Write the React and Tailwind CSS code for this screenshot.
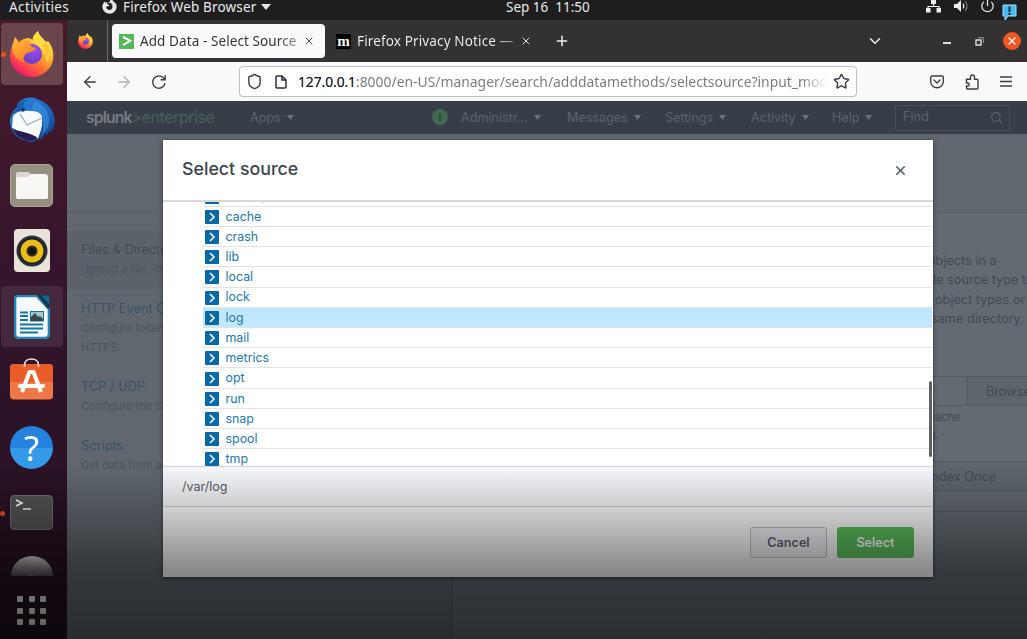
import React from "react";
import { Power, Star, Menu, Search, X, Plus, ChevronDown, ArrowLeft, ArrowRight, Shield } from "lucide-react";
import { FaFirefoxBrowser } from "react-icons/fa";

const ROWS = ["backups", "cache", "crash", "lib", "local", "lock", "log", "mail", "metrics", "opt", "run", "snap", "spool", "tmp"];

function Firefox({ className, id }) {
  return (
    <svg viewBox="0 0 44 46" className={className}>
      <defs>
        <linearGradient id={id + "a"} x1="0.85" y1="0.1" x2="0.25" y2="0.95">
          <stop offset="0" stopColor="#fff44f" />
          <stop offset="0.35" stopColor="#ffb52e" />
          <stop offset="0.65" stopColor="#ff6a36" />
          <stop offset="1" stopColor="#f5156c" />
        </linearGradient>
        <radialGradient id={id + "b"} cx="0.6" cy="0.3" r="0.8">
          <stop offset="0" stopColor="#a04fe8" />
          <stop offset="1" stopColor="#5b3bc4" />
        </radialGradient>
        <linearGradient id={id + "c"} x1="0" y1="0" x2="0.6" y2="1">
          <stop offset="0" stopColor="#ffc03a" />
          <stop offset="1" stopColor="#ff7a24" />
        </linearGradient>
      </defs>
      <path d="M28 0c1 5 5 7 8 11l2-1c5 6 6 13 5 19-2 10-11 17-21 17C10 46 1 37 0 26 0 20 2 14 5 11l0-5 4 5c3-3 7-4 10-4l4 2c1-4 2-7 5-9z" fill={"url(#" + id + "a)"} />
      <path d="M28 0c1 5 5 7 8 12 5 7 4 15 1 20 0-8-5-14-10-17-4-3-5-6-4-9 1-2 3-4 5-6z" fill="#ffdc3c" />
      <circle cx="22" cy="23" r="10" fill={"url(#" + id + "b)"} />
      <path d="M2 15l3-9 4 6c3-2 7-3 11-2-1 2 0 4 2 6l4 1c-1 3-5 4-9 5-4 3-4 6-3 9-7-1-12-7-12-16z" fill={"url(#" + id + "c)"} />
      <path d="M32 14c4 5 5 11 2 16 6-5 6-13 3-18z" fill="#ffc53a" />
    </svg>
  );
}

function Thunderbird() {
  return (
    <svg viewBox="0 0 46 46" className="h-[46px] w-[46px]">
      <defs>
        <linearGradient id="tb" x1="0" y1="0" x2="1" y2="1">
          <stop offset="0" stopColor="#2c8be0" />
          <stop offset="0.55" stopColor="#1f66bd" />
          <stop offset="1" stopColor="#14357f" />
        </linearGradient>
      </defs>
      <path d="M13 3c4-3 11-3 15-1 10 3 17 11 18 21 0 5-2 10-5 14l1-5-5 7 0-4-5 8-1-3c-4 5-10 6-13 4C8 42 0 34 1 22c1-5 3-9 7-12 0-3 2-6 5-7z" fill="url(#tb)" />
      <path d="M26 4c7 3 13 9 14 17 1 7-2 12-7 17 2-6 2-14-1-19-2-5-7-6-10-7z" fill="#3c9bea" opacity=".55" />
      <path d="M4 19c3-5 11-6 18-5 6 0 10 2 11 6l0 8c-1 6-3 10-4 14C18 41 7 36 3 31z" fill="#f8fafc" />
      <path d="M11 17l7 11 15-7" fill="none" stroke="#9cabb9" strokeWidth="1.2" />
      <path d="M3 31c6 4 18 4 26 10-5 4-12 3-17 0-4-2-7-6-9-10z" fill="#251d51" />
      <path d="M2 22c2-7 7-9 15-9-5-4-2-9 2-10-7-1-10 3-11 8-4 3-6 7-6 11z" fill="#1a5cae" />
      <circle cx="14" cy="13" r="1.8" fill="#14325f" />
    </svg>
  );
}

function Files() {
  return (
    <div className="flex h-[43px] w-[43px] items-center justify-center rounded-[5px] border border-[#aaa495] bg-[#969080]">
      <svg viewBox="0 0 32 28" className="h-[28px] w-[32px]">
        <path d="M0 2a2 2 0 012-2h11l3 4h16v22H2a2 2 0 01-2-2z" fill="#dcd7ce" />
        <path d="M0 7a2 2 0 012-2h10l3-3h14a3 3 0 013 3v20a2 2 0 01-2 2H2a2 2 0 01-2-2z" fill="#f8f6f4" />
      </svg>
    </div>
  );
}

function Speaker() {
  return (
    <svg viewBox="0 0 36 43" className="h-[43px] w-[36px]">
      <rect width="36" height="43" rx="4" fill="#e9e3da" />
      <circle cx="18" cy="22" r="15.5" fill="#29313b" />
      <circle cx="18" cy="22" r="13" fill="#15191f" />
      <circle cx="18" cy="22" r="11.5" fill="#eabd18" />
      <circle cx="18" cy="22" r="5.5" fill="#2b2924" />
      <circle cx="18" cy="22" r="3.3" fill="#111" />
    </svg>
  );
}

function Writer() {
  return (
    <svg viewBox="0 0 36 44" className="h-[44px] w-[36px]">
      <path d="M4 1h19l12 13v25a4 4 0 01-4 4H5a4 4 0 01-4-4V4a3 3 0 013-3z" fill="#f6fafc" stroke="#2487b7" strokeWidth="2.6" />
      <path d="M27 .5h8v9z" fill="#0c6b9c" />
      <path d="M23 0h4l8 9v6z" fill="#15364f" />
      <path d="M6 17.500h8M6 21h8M6 25h8M6 29.500h23M6 33.500h23M6 37.500h18" stroke="#1775a4" strokeWidth="1.8" />
      <rect x="16.500" y="16.500" width="13" height="9.500" fill="#9ac7df" stroke="#1775a4" />
      <path d="M17 26v-4l4-4 3 4 2-1 3 3v2z" fill="#3b4742" />
      <circle cx="27" cy="19" r="1.3" fill="#f0c43a" />
    </svg>
  );
}

function Software() {
  return (
    <svg viewBox="0 0 43 42" className="h-[42px] w-[43px]">
      <rect y="6" width="43" height="35.500" rx="4" fill="#f07746" />
      <path d="M4 6h35a4 4 0 014 4v14H0V10a4 4 0 014-4z" fill="#ea5c28" />
      <path d="M14.500 9V7c0-8 14-8 14 0v2" fill="none" stroke="#f5e8da" strokeWidth="1.6" />
      <path d="M12 34l7.500-20h4L31 34" fill="none" stroke="#fff" strokeWidth="4" strokeLinejoin="round" />
      <path d="M10 28h23" fill="none" stroke="#fff" strokeWidth="4" strokeLinecap="round" />
    </svg>
  );
}

function Disc() {
  return (
    <svg viewBox="0 0 42 20" className="h-[20px] w-[42px]">
      <defs>
        <linearGradient id="disc" x1="0" y1="0" x2="0" y2="1">
          <stop offset="0" stopColor="#d2cdd2" />
          <stop offset="1" stopColor="#4d444e" />
        </linearGradient>
      </defs>
      <path d="M0 20a21 20 0 0142 0z" fill="url(#disc)" />
      <path d="M21 20L7 7M21 20L12 3" stroke="#85808a" strokeWidth=".5" />
      <circle cx="21" cy="20" r="5" fill="none" stroke="#5b525c" />
    </svg>
  );
}

function Dock() {
  return (
    <aside className="flex h-[619px] w-[67px] shrink-0 flex-col items-center bg-linear-to-b from-[#47192a] via-[#33152c] via-45% to-[#230f20] pr-[4px]">
      <div className="relative mt-[3px] flex h-[62px] w-[62px] items-center justify-center rounded-[4px] bg-[#6b454e]">
        <i className="absolute left-0 top-[29px] h-[5px] w-[5px] rounded-full bg-[#e95420]" />
        <Firefox id="dockfx" className="h-[46px] w-[44px]" />
      </div>
      <div className="mt-[12px]"><Thunderbird /></div>
      <div className="mt-[21px]"><Files /></div>
      <div className="mt-[22px]"><Speaker /></div>
      <div className="mt-[14px] flex h-[61px] w-[62px] items-center justify-center rounded-[4px] bg-[#43283e]"><Writer /></div>
      <div className="mt-[11px]"><Software /></div>
      <div className="mt-[26px] flex h-[43px] w-[43px] items-center justify-center rounded-full bg-linear-to-b from-[#2582dd] from-50% to-[#3399e8] to-50% font-['Noto_Sans',sans-serif] text-[34px] leading-none text-white">?</div>
      <div className="relative mt-[26px] h-[35px] w-[43px] rounded-[4px] border border-[#707070] bg-[#535353]">
        <i className="absolute -left-[11px] top-[15px] h-[5px] w-[5px] rounded-full bg-[#e95420]" />
        <svg viewBox="0 0 43 35" className="h-[35px] w-[43px]"><path d="M5 4l6 3-6 3M12 13h8" fill="none" stroke="#fff" strokeWidth="1.6" /></svg>
      </div>
      <div className="mt-[26px]"><Disc /></div>
      <div className="mt-[20px] grid grid-cols-3 gap-[5.500px]">
        {[0, 1, 2, 3, 4, 5, 6, 7, 8].map((i) => <i key={i} className="h-[6px] w-[6px] rounded-[1px] bg-[#e0dce0]" />)}
      </div>
    </aside>
  );
}

function TopBar() {
  return (
    <header className="flex h-[20px] items-start bg-[#1e1e1e] font-['Noto_Sans',sans-serif] text-[13.500px] leading-[14px] text-[#e8e8e8]">
      <span className="w-[94px] pl-[9px] tracking-[0.4px]">Activities</span>
      <span className="flex w-[412px] items-start">
        <FaFirefoxBrowser className="-mt-px ml-[8px] h-[15px] w-[15px]" />
        <span className="ml-[6px] whitespace-nowrap tracking-[0.15px]">Firefox Web Browser</span>
        <svg viewBox="0 0 10 6" className="ml-[5px] mt-[4px] h-[6px] w-[10px]"><path d="M0 0h10L5 6z" fill="#e8e8e8" /></svg>
      </span>
      <span className="whitespace-pre">Sep 16  11:50</span>
      <span className="ml-auto flex items-start pr-[10px]">
        <svg viewBox="0 0 15 13" className="h-[13px] w-[15px]"><path d="M5 0h5v4H5zM0 8h4.500v4.500H0zM10.500 8H15v4.500h-4.500z" fill="#eee" /><path d="M7.500 4v3M2 9V6.500h11V9" fill="none" stroke="#eee" strokeWidth="1.2" /></svg>
        <svg viewBox="0 0 14 12" className="ml-[13px] h-[12px] w-[14px]"><path d="M0 4h3l4-4v12L3 8H0z" fill="#eee" /><path d="M9 3.500c1 1.500 1 3.500 0 5" fill="none" stroke="#eee" strokeWidth="1.2" /><path d="M11 1c2.500 3 2.500 7 0 10" fill="none" stroke="#888" strokeWidth="1.1" /></svg>
        <Power className="-mt-[2px] ml-[12px] h-[15px] w-[15px]" strokeWidth={2} />
        <svg viewBox="0 0 15 16" className="ml-[7px] mt-[4px] h-[16px] w-[15px]"><path d="M1 1h13v11H6l-3 4v-4H1z" fill="#48b9ef" stroke="#9ce2ff" /><path d="M7.500 2.500V8M7.500 9v2" stroke="#0d2633" strokeWidth="2" /></svg>
      </span>
    </header>
  );
}

function TabBar() {
  return (
    <div className="flex h-[42px] items-center bg-[#333132] font-['Noto_Sans',sans-serif] text-[13.500px]">
      <div className="flex h-full w-[41px] items-center border-r border-[#6b696a] pl-[11px]"><Firefox id="tabfx" className="h-[16px] w-[15px]" /></div>
      <div className="ml-[4px] flex h-[34px] w-[213px] items-center rounded-[4px] bg-[#fafafc] pl-[7px]">
        <span className="flex h-[15px] w-[15px] shrink-0 items-center justify-center bg-[#53b855]">
          <svg viewBox="0 0 10 10" className="h-[10px] w-[10px]"><path d="M1 1l7.500 3.800L1 9" fill="none" stroke="#fff" strokeWidth="2" /></svg>
        </span>
        <span className="ml-[6px] w-[161px] overflow-hidden whitespace-nowrap bg-linear-to-r from-[#303036] from-85% to-[#aaa] bg-clip-text tracking-[0.09px] text-transparent">Add Data - Select Source</span>
        <X className="ml-[2px] h-[12px] w-[12px] text-[#4a4a50]" strokeWidth={2} />
      </div>
      <div className="ml-[11px] flex items-center">
        <span className="flex h-[15px] w-[15px] items-center justify-center bg-black font-['Liberation_Serif',serif] text-[15px] font-bold leading-none text-white">m</span>
        <span className="ml-[6px] w-[157px] overflow-hidden whitespace-nowrap bg-linear-to-r from-[#f2f2f2] from-88% to-[#777] bg-clip-text tracking-[0.14px] text-transparent">Firefox Privacy Notice —</span>
        <X className="ml-[6px] h-[12px] w-[12px] text-[#e0e0e0]" strokeWidth={2} />
      </div>
      <Plus className="ml-[22px] h-[16px] w-[16px] text-[#eee]" strokeWidth={2.2} />
      <div className="ml-auto flex items-center pr-[6px]">
        <ChevronDown className="h-[18px] w-[18px] text-[#eee]" strokeWidth={2} />
        <i className="ml-[59px] mt-[4px] h-[1.500px] w-[8px] bg-[#ddd]" />
        <svg viewBox="0 0 9 9" className="ml-[24px] h-[9px] w-[9px]"><path d="M1 3h5v5H1z" fill="none" stroke="#ddd" strokeWidth="1.4" /><path d="M3 .7h5.300V6" fill="none" stroke="#999" /></svg>
        <span className="ml-[19px] flex h-[18px] w-[18px] items-center justify-center rounded-full bg-[#ee5622]"><X className="h-[12px] w-[12px] text-white" strokeWidth={2.400} /></span>
      </div>
    </div>
  );
}

function Toolbar() {
  return (
    <div className="flex h-[39px] items-center bg-[#f9f9fb] text-[#3e3e46]">
      <ArrowLeft className="ml-[14px] h-[18px] w-[18px]" strokeWidth={1.800} />
      <ArrowRight className="ml-[16px] h-[18px] w-[18px] text-[#b4b4b8]" strokeWidth={1.800} />
      <svg viewBox="0 0 16 16" className="ml-[18px] h-[16px] w-[16px]"><path d="M14 9A6.200 6.200 0 1112.300 3.800L14 5.500M14.200 1v4.800H9.500" fill="none" stroke="#3e3e46" strokeWidth="1.4" /></svg>
      <div className="ml-[72px] flex h-[31px] w-[618px] items-center rounded-[4px] border border-[#bcbcc2] bg-white">
        <Shield className="ml-[6px] h-[17px] w-[17px]" strokeWidth={2} />
        <svg viewBox="0 0 12 14" className="ml-[12px] h-[14px] w-[12px]"><path d="M1 2a1 1 0 011-1h5l4 4v7a1 1 0 01-1 1H2a1 1 0 01-1-1zM7 1v4h4" fill="none" stroke="#2e2e34" strokeWidth="1.5" /></svg>
        <span className="ml-[11px] mt-px w-[529px] overflow-hidden whitespace-nowrap bg-linear-to-r from-[#77777c] from-95% to-[#fff] bg-clip-text font-['Noto_Sans',sans-serif] text-[13.900px] text-transparent"><span className="tracking-[-0.1px] text-[#1d1d22]">127.0.0.1</span>:8000/en-US/manager/search/adddatamethods/selectsource?input_mode=1</span>
        <Star className="ml-[6px] h-[17px] w-[17px] shrink-0" strokeWidth={2} />
      </div>
      <svg viewBox="0 0 14 14" className="ml-[73px] h-[14px] w-[14px]"><path d="M2 1h10a1.300 1.300 0 011.300 1.300V6.500a6.300 6.300 0 01-12.600 0V2.300A1.300 1.300 0 012 1zM4 5l3 3 3-3" fill="none" stroke="#3e3e46" strokeWidth="1.4" strokeLinecap="round" /></svg>
      <svg viewBox="0 0 14 16" className="ml-[21px] h-[16px] w-[14px]"><path d="M1.500 9V5.200h4V3a2 2 0 014 0v2.200H12a1 1 0 011 1V14a1 1 0 01-1 1H2.500a1 1 0 01-1-1v-2h1.200a1.500 1.500 0 000-3z" fill="none" stroke="#3e3e46" strokeWidth="1.4" /></svg>
      <svg viewBox="0 0 12 11" className="ml-[21px] h-[11px] w-[12px]"><path d="M0 1h12M0 5.500h12M0 10h12" stroke="#3e3e46" strokeWidth="1.3" /></svg>
    </div>
  );
}

function Caret() {
  return <svg viewBox="0 0 7 5" className="ml-[6px] h-[5px] w-[7px]"><path d="M0 0h7L3.500 5z" fill="#667078" /></svg>;
}

function NavItem({ label, className }) {
  return <span className={"flex shrink-0 items-center whitespace-nowrap " + className}>{label}<Caret /></span>;
}

function SplunkNav() {
  return (
    <nav className="flex h-[33px] items-center bg-[#373e48] pt-px text-[12.600px] text-[#5b636c]">
      <span className="ml-[19px] w-[164px] whitespace-nowrap text-[15.800px] tracking-[-0.35px]"><b className="font-semibold tracking-[-0.9px] text-[#747a81]">splunk</b><span className="text-[#476153]">&gt;enterprise</span></span>
      <NavItem label="Apps" className="w-[182px]" />
      <span className="mb-[2px] flex h-[16px] w-[16px] items-center justify-center rounded-full bg-[#3f6a4f] font-['Liberation_Serif',serif] text-[12px] font-bold text-[#2f4640]">i</span>
      <NavItem label="Administr..." className="ml-[13px] w-[106px]" />
      <NavItem label="Messages" className="w-[98px]" />
      <NavItem label="Settings" className="w-[86px]" />
      <NavItem label="Activity" className="w-[81px]" />
      <NavItem label="Help" className="w-[63px]" />
      <span className="mb-px flex h-[26px] w-[115px] items-center justify-between rounded-[2px] border border-[#48505a] pl-[7px] pr-[6px]">Find<Search className="h-[13px] w-[13px]" strokeWidth={2} /></span>
    </nav>
  );
}

function SourceKind({ title, lines, className, dark }) {
  return (
    <div className={"overflow-hidden whitespace-nowrap pl-[14px] " + className}>
      <div className={"text-[12.800px] leading-[20px] " + (dark ? "text-[#444b53]" : "text-[#3a5367]")}>{title}</div>
      {lines.map((l) => <div key={l} className="text-[11px] leading-[19px] text-[#4c545c]">{l}</div>)}
    </div>
  );
}

function Background() {
  return (
    <div className="flex h-[505px] flex-col bg-[#60676f]">
      <div className="h-[79px] shrink-0 border-b border-[#596068]" />
      <div className="flex min-h-0 flex-1">
        <div className="w-[385px] shrink-0 border-r border-[#50575f]">
          <SourceKind title="Files & Directories" lines={["Upload a file, index a local file, or monitor an entire directory."]} className="mt-[18px] h-[58px] bg-[#5b626a] pt-[9px]" dark />
          <SourceKind title="HTTP Event Collector" lines={["Configure tokens that clients can use to send data over HTTP or", "HTTPS."]} className="h-[78px] pt-[10px]" />
          <SourceKind title="TCP / UDP" lines={["Configure the Splunk platform to listen on a network port."]} className="h-[59px] pt-[10px]" />
          <SourceKind title="Scripts" lines={["Get data from any API, service, or database with a script."]} className="h-[59px] pt-[10px]" />
        </div>
        <div className="min-w-0 flex-1 overflow-hidden whitespace-nowrap bg-[#636a72] pl-[470px] pt-[38px] text-[12.700px] leading-[19.400px] text-[#434a52]">
          <div className="pl-[6px]">objects in a</div>
          <div className="-ml-[14px]">single source type to</div>
          <div className="pl-[13px]">object types or</div>
          <div className="pl-[9px]">same directory,</div>
          <div className="mt-[47px] flex h-[30px] border-y border-[#545b63]">
            <span className="w-[46px] shrink-0 border-r border-[#545b63]" />
            <span className="w-full shrink-0 bg-[#5e656d] pl-[18px] leading-[30px]">Browse</span>
          </div>
          <div className="mt-[2px] text-[11px] leading-[18px]">apache</div>
          <div className="pl-[7px] text-[11px] leading-[18px]">g.</div>
          <div className="mt-[17px] h-[30px] border-y border-[#545b63] bg-[#5e656d] pl-[6px] leading-[30px]">Index Once</div>
          <div className="mt-[20px] border-t border-[#575e66]" />
        </div>
      </div>
    </div>
  );
}

function Dialog() {
  return (
    <section className="absolute left-[163px] top-[140px] flex h-[437px] w-[770px] flex-col bg-white shadow-[0_1px_4px_rgba(0,0,0,0.55)]">
      <div className="flex h-[62px] shrink-0 items-center justify-between border-b-2 border-[#d8d9dc] pl-[19px] pr-[25px] text-[#3c444d]">
        <h1 className="-mt-[2px] text-[17.800px] font-medium">Select source</h1>
        <X className="h-[15px] w-[15px] text-[#4d5568]" strokeWidth={2.400} />
      </div>
      <div className="relative flex h-[264px] shrink-0 flex-col overflow-hidden pl-[40px] pr-px">
        <div className="-mt-[15.500px]">
          {ROWS.map((r) => (
            <div key={r} className={"flex h-[20.230px] items-center border-b border-[#e2e3e5] pl-[2px] text-[12.400px] text-[#2377a9] " + (r === "log" ? "bg-[#bfe8ff]" : "")}>
              <span className="mt-px flex h-[14px] w-[14px] items-center justify-center rounded-[1px] bg-[#0869a6]">
                <svg viewBox="0 0 8 10" className="h-[10px] w-[8px]"><path d="M2 1l4 4-4 4" fill="none" stroke="#fff" strokeWidth="1.6" /></svg>
              </span>
              <span className="ml-[6.500px] pt-px">{r}</span>
            </div>
          ))}
        </div>
        <i className="absolute right-[1px] top-[179px] h-[76px] w-[3px] rounded-full bg-[#5d6265]" />
      </div>
      <div className="flex h-[41px] shrink-0 items-center border-y border-[#cfd2d8] bg-[#f7f8fb] pl-[19px] pt-[2px] text-[12.500px] text-[#565d66]">/var/log</div>
      <div className="flex flex-1 items-center justify-end gap-[10px] pr-[19px] text-[12.600px] font-semibold">
        <button className="h-[31px] w-[77px] rounded-[3px] border border-[#bdc2c9] bg-[#f4f5f8] pt-[2px] text-[#60666f]">Cancel</button>
        <button className="h-[31px] w-[77px] rounded-[3px] bg-[#5cc05c] pt-[2px] text-white">Select</button>
      </div>
    </section>
  );
}

export default function App() {
  return (
    <div className="relative h-[639px] w-[1027px] overflow-hidden bg-black font-[Inter,sans-serif]">
      <TopBar />
      <div className="flex">
        <Dock />
        <main className="min-w-0 flex-1">
          <TabBar />
          <Toolbar />
          <SplunkNav />
          <Background />
        </main>
      </div>
      <Dialog />
      <div className="pointer-events-none absolute bottom-0 left-0 h-[173px] w-full bg-linear-to-b from-black/0 via-black/46 via-60% to-black/57" />
    </div>
  );
}
